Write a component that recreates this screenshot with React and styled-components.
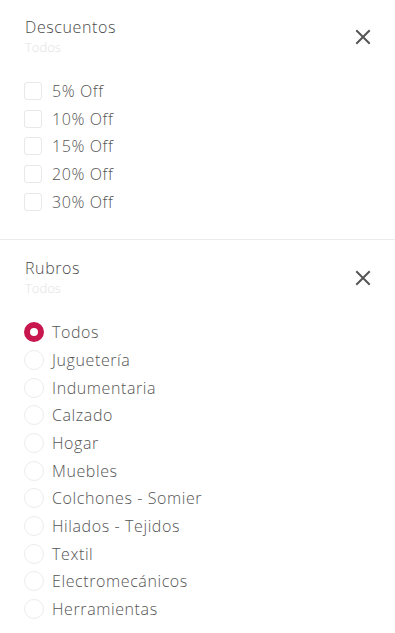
import React, { useState } from "react";
import styled, { createGlobalStyle } from "styled-components";

const Global = createGlobalStyle`
    body {
        margin: 0;
        background: #fff;
        font-family: "Open Sans", Lato, sans-serif;
    }
`

const descuentos = ["5% Off", "10% Off", "15% Off", "20% Off", "30% Off"]
const rubros = [
    "Todos", "Juguetería", "Indumentaria", "Calzado", "Hogar", "Muebles",
    "Colchones - Somier", "Hilados - Tejidos", "Textil", "Electromecánicos", "Herramientas"
]

function CloseIcon() {
    return (
        <svg width="16" height="16" viewBox="0 0 16 16">
            <path d="M2 2L14 14M14 2L2 14" stroke="#555" strokeWidth="2" strokeLinecap="square" />
        </svg>
    )
}

function App() {
    const [checked, setChecked] = useState([])
    const [rubro, setRubro] = useState("Todos")

    const toggle = (item) => {
        setChecked(checked.includes(item) ? checked.filter(i => i !== item) : [...checked, item])
    }

    return (
        <>
            <Global />
            <Section>
                <Header>
                    <div>
                        <Title>Descuentos</Title>
                        <Sub>Todos</Sub>
                    </div>
                    <CloseButton><CloseIcon /></CloseButton>
                </Header>
                <List>
                    {descuentos.map(d => (
                        <Row key={d} onClick={() => toggle(d)}>
                            <Check $on={checked.includes(d)} />
                            <Label>{d}</Label>
                        </Row>
                    ))}
                </List>
            </Section>
            <Section $last>
                <Header>
                    <div>
                        <Title>Rubros</Title>
                        <Sub>Todos</Sub>
                    </div>
                    <CloseButton><CloseIcon /></CloseButton>
                </Header>
                <List>
                    {rubros.map(r => (
                        <Row key={r} onClick={() => setRubro(r)}>
                            <Radio $on={rubro === r} />
                            <Label>{r}</Label>
                        </Row>
                    ))}
                </List>
            </Section>
        </>
    )
}
export default App

const Section = styled.section`
    padding: ${p => p.$last ? "18px" : "17px"} 24px ${p => p.$last ? "10px" : "24px"};
    border-bottom: ${p => p.$last ? "none" : "1px solid #ececec"};
`

const Header = styled.div`
    display: flex;
    align-items: center;
    justify-content: space-between;
    padding-left: 1px;
`

const Title = styled.div`
    font-size: 16px;
    line-height: 20px;
    font-weight: 350;
    letter-spacing: 0.6px;
    color: #4a4a4a;
`

const Sub = styled.div`
    margin-top: 2px;
    font-size: 13px;
    line-height: 16px;
    font-weight: 350;
    color: #e2e2e4;
`

const CloseButton = styled.button`
    border: none;
    background: none;
    padding: 0;
    margin-top: 2px;
    display: flex;
    cursor: pointer;
`

const List = styled.ul`
    list-style: none;
    margin: 22px 0 0;
    padding: 0;
`

const Row = styled.li`
    display: flex;
    align-items: center;
    height: 27.7px;
    cursor: pointer;
`

const Check = styled.span`
    box-sizing: border-box;
    width: 18px;
    height: 18px;
    border: 1px solid #e8e8e8;
    border-radius: 3px;
    background: ${p => p.$on ? "#c8174f" : "#fff"};
    margin-right: 10px;
`

const Radio = styled.span`
    box-sizing: border-box;
    width: 20px;
    height: 20px;
    border-radius: 50%;
    border: ${p => p.$on ? "6px solid #c8174f" : "1px solid #ececec"};
    background: #fff;
    margin-right: 8px;
`

const Label = styled.span`
    font-size: 16px;
    font-weight: 350;
    letter-spacing: 0.6px;
    color: #555;
`
